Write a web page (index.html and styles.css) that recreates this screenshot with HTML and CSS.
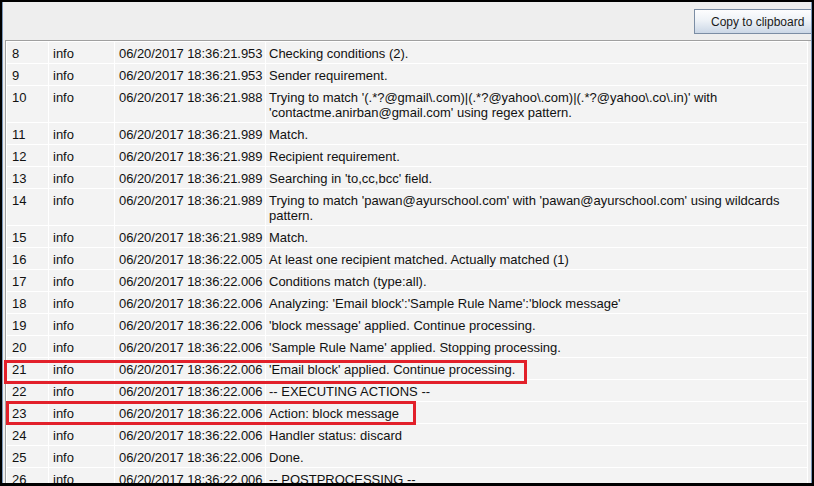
FILE: index.html
```html
<html lang="en">
<head>
<meta charset="UTF-8">
<meta name="viewport" content="width=device-width, initial-scale=1.0">
<title>log</title>

<link rel="stylesheet" href="styles.css">
</head>

<body>

  <div class="window">
    <div class="toolbar">
      <button class="copy-btn">Copy to clipboard</button>
    </div>

    <div class="log">
      <table class="log-table">
        <colgroup>
          <col class="col-num">
          <col class="col-level">
          <col class="col-time">
          <col class="col-msg">
        </colgroup>
        <tr><td>8</td><td>info</td><td>06/20/2017 18:36:21.953</td><td>Checking conditions (2).</td></tr>
        <tr><td>9</td><td>info</td><td>06/20/2017 18:36:21.953</td><td>Sender requirement.</td></tr>
        <tr><td>10</td><td>info</td><td>06/20/2017 18:36:21.988</td><td>Trying to match '(.*?@gmail\.com)|(.*?@yahoo\.com)|(.*?@yahoo\.co\.in)' with 'contactme.anirban@gmail.com' using regex pattern.</td></tr>
        <tr><td>11</td><td>info</td><td>06/20/2017 18:36:21.989</td><td>Match.</td></tr>
        <tr><td>12</td><td>info</td><td>06/20/2017 18:36:21.989</td><td>Recipient requirement.</td></tr>
        <tr><td>13</td><td>info</td><td>06/20/2017 18:36:21.989</td><td>Searching in 'to,cc,bcc' field.</td></tr>
        <tr><td>14</td><td>info</td><td>06/20/2017 18:36:21.989</td><td>Trying to match 'pawan@ayurschool.com' with 'pawan@ayurschool.com' using wildcards pattern.</td></tr>
        <tr><td>15</td><td>info</td><td>06/20/2017 18:36:21.989</td><td>Match.</td></tr>
        <tr><td>16</td><td>info</td><td>06/20/2017 18:36:22.005</td><td>At least one recipient matched. Actually matched (1)</td></tr>
        <tr><td>17</td><td>info</td><td>06/20/2017 18:36:22.006</td><td>Conditions match (type:all).</td></tr>
        <tr><td>18</td><td>info</td><td>06/20/2017 18:36:22.006</td><td>Analyzing: 'Email block':'Sample Rule Name':'block message'</td></tr>
        <tr><td>19</td><td>info</td><td>06/20/2017 18:36:22.006</td><td>'block message' applied. Continue processing.</td></tr>
        <tr><td>20</td><td>info</td><td>06/20/2017 18:36:22.006</td><td>'Sample Rule Name' applied. Stopping processing.</td></tr>
        <tr><td>21</td><td>info</td><td>06/20/2017 18:36:22.006</td><td>'Email block' applied. Continue processing.</td></tr>
        <tr><td>22</td><td>info</td><td>06/20/2017 18:36:22.006</td><td>-- EXECUTING ACTIONS --</td></tr>
        <tr><td>23</td><td>info</td><td>06/20/2017 18:36:22.006</td><td>Action: block message</td></tr>
        <tr><td>24</td><td>info</td><td>06/20/2017 18:36:22.006</td><td>Handler status: discard</td></tr>
        <tr><td>25</td><td>info</td><td>06/20/2017 18:36:22.006</td><td>Done.</td></tr>
        <tr><td>26</td><td>info</td><td>06/20/2017 18:36:22.006</td><td>-- POSTPROCESSING --</td></tr>
      </table>
    </div>

    <!-- red highlight boxes drawn over the log -->
    <div class="mark mark-one"></div>
    <div class="mark mark-two"></div>
  </div>

</body>
</html>
```

FILE: styles.css
```css
:root{
  --firstfont: "Liberation Sans", Arial, sans-serif;
  --panel: #eeeeee;
  --cell: #f3f3f3;
  --frame: #7a96b8;
  --line: #a0a0a0;
  --red: #e2202a;
}

*{
margin: 0;
padding: 0;
box-sizing: border-box;
font-family: var(--firstfont);
}

body {
background-color: #000;
color: #111;
}

.window {
position: relative;
margin: 2px 2px 0 2px;
height: 481px;
background-color: var(--panel);
border-left: 1px solid var(--frame);
border-right: 1px solid var(--frame);
overflow: hidden;
}

.toolbar {
height: 38px;
display: flex;
justify-content: flex-end;
align-items: flex-start;
padding-top: 7px;
}

.copy-btn {
width: 122px;
height: 25px;
margin-right: -5px;
padding-left: 16px;
text-align: left;
font-size: 12px;
color: #1a1a1a;
border: 1px solid #7b8da4;
background: linear-gradient(#fdfdfe, #eef2f7 45%, #cbd7e6);
}

.log {
margin-left: 2px;
border-top: 1px solid var(--line);
border-left: 1px solid var(--line);
}

.log-table {
width: 802px;
table-layout: fixed;
border-collapse: separate;
border-spacing: 1px;
background-color: #fff;
font-size: 13px;
line-height: 15px;
}

.col-num { width: 41px; }
.col-level { width: 65px; }
.col-time { width: 150px; }

.log-table td {
background-color: var(--cell);
padding: 4px 4px 2px 4px;
vertical-align: top;
white-space: nowrap;
overflow: hidden;
}

.log-table td:first-child {
padding-left: 5px;
}

.log-table td:nth-child(3) {
padding-left: 4px;
padding-right: 0;
letter-spacing: -0.05px;
}

.log-table td:last-child {
padding-left: 3px;
white-space: normal;
}

.mark {
position: absolute;
border: 3px solid var(--red);
}

.mark-one {
left: 1px;
top: 358px;
width: 523px;
height: 24px;
}

.mark-two {
left: 3px;
top: 399px;
width: 410px;
height: 24px;
}
```
